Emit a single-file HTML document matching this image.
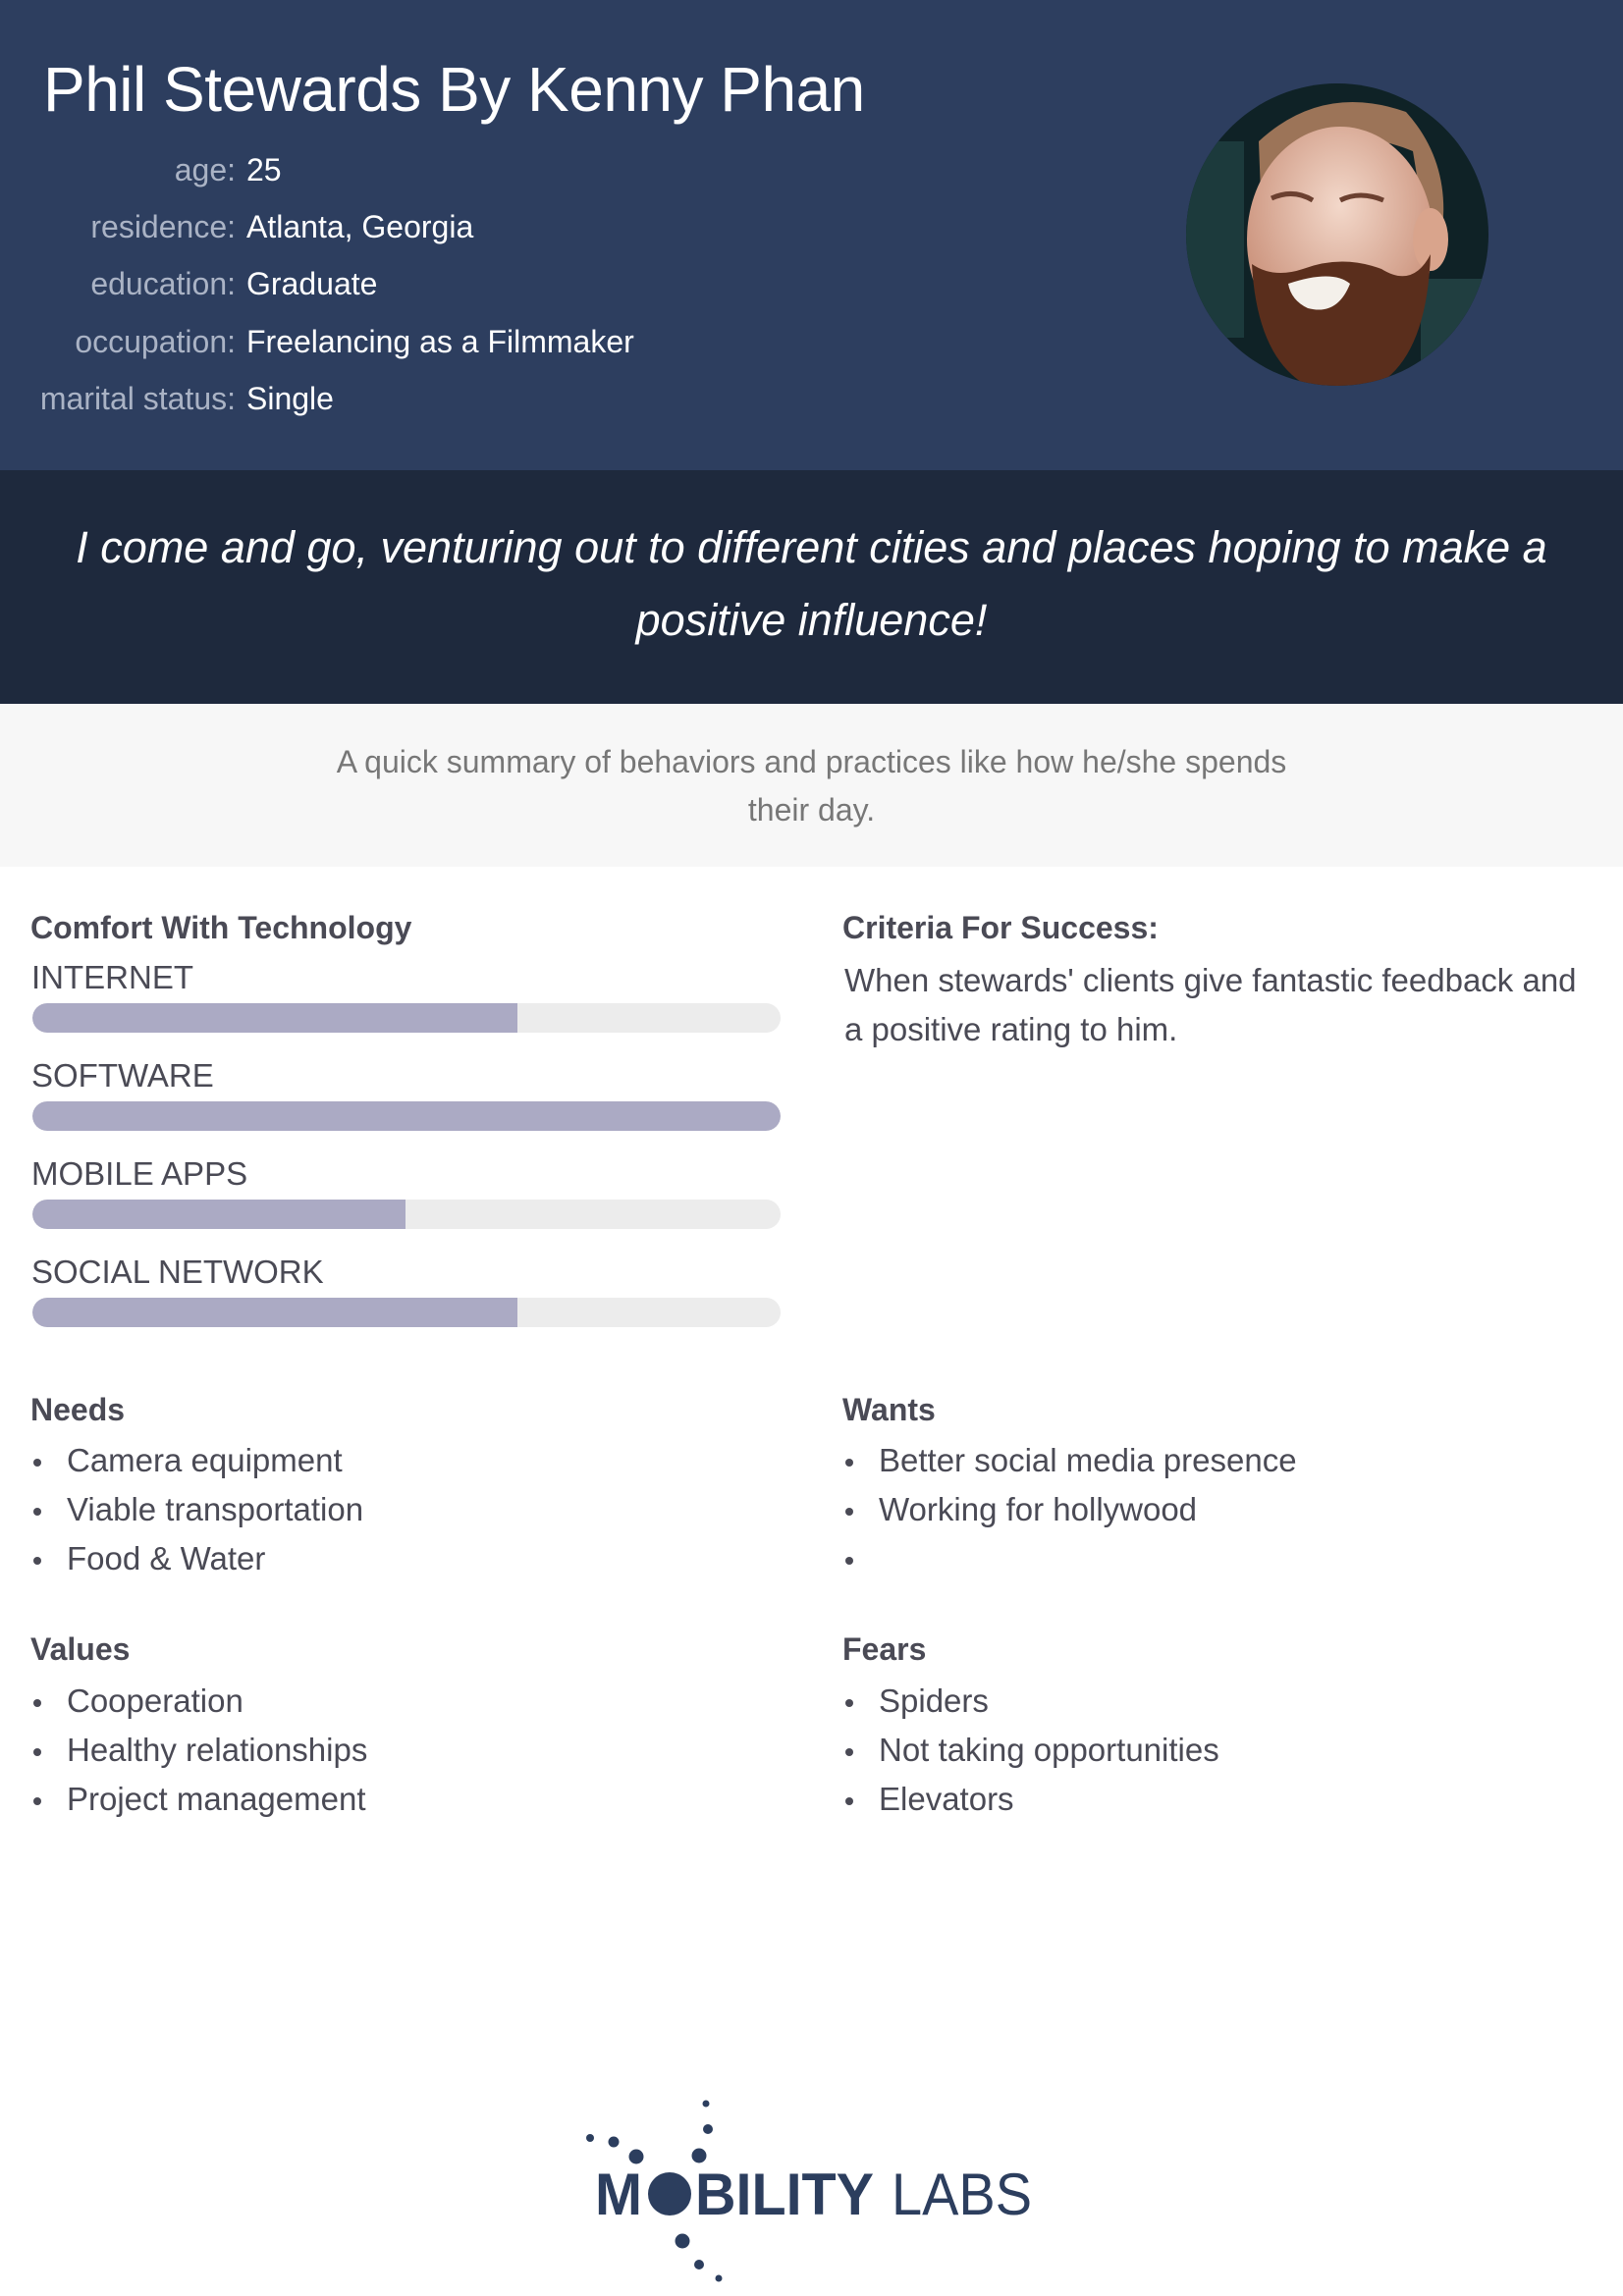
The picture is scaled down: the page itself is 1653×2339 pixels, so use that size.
<!DOCTYPE html>
<html><head><meta charset="utf-8"><style>
*{margin:0;padding:0;box-sizing:border-box}
body{width:1653px;height:2339px;background:#fff;font-family:"Liberation Sans",sans-serif;position:relative;overflow:hidden}
.abs{position:absolute}
#hdr{left:0;top:0;width:1653px;height:479px;background:#2d3e5f}
#quote{left:0;top:479px;width:1653px;height:238px;background:#1e293d}
#sum{left:0;top:717px;width:1653px;height:166px;background:#f7f7f7}
h1{position:absolute;left:44px;top:54px;font-size:64px;font-weight:normal;color:#fff;white-space:nowrap;letter-spacing:-0.5px}
.row{position:absolute;left:0;font-size:32px;white-space:nowrap;line-height:40px}
.row .lw{position:absolute;left:0;width:240px;text-align:right;color:#aab3c5}
.row .v{position:absolute;left:251px;color:#fff}
.q{position:absolute;left:0;width:1653px;text-align:center;color:#fff;font-style:italic;font-size:45px;line-height:74px;top:521px}
.s{position:absolute;left:0;width:1653px;text-align:center;color:#777;font-size:32px;line-height:49px;top:752px}
.h{position:absolute;font-size:32px;font-weight:bold;color:#4a4a55}
.lab{position:absolute;left:32px;font-size:33px;color:#4a4a55}
.bar{position:absolute;left:33px;width:762px;height:30px;border-radius:15px;background:#ececec;overflow:hidden}
.bar i{display:block;height:100%;background:#abaac4;border-radius:15px 0 0 15px}
.t{position:absolute;font-size:33px;color:#4a4a55;line-height:50px}
ul{position:absolute;list-style:none;font-size:33px;color:#4a4a55;line-height:50px}
ul li{position:relative;padding-left:37px;height:50px}
ul li:before{content:"";position:absolute;left:3px;top:23px;width:8px;height:8px;border-radius:50%;background:#4a4a55}
</style></head><body>
<div id="hdr" class="abs"></div>
<div id="quote" class="abs"></div>
<div id="sum" class="abs"></div>
<h1>Phil Stewards By Kenny Phan</h1>
<div class="row" style="top:153px;width:800px"><span class="lw">age:</span><span class="v">25</span></div>
<div class="row" style="top:211px;width:800px"><span class="lw">residence:</span><span class="v">Atlanta, Georgia</span></div>
<div class="row" style="top:269px;width:800px"><span class="lw">education:</span><span class="v">Graduate</span></div>
<div class="row" style="top:328px;width:800px"><span class="lw">occupation:</span><span class="v">Freelancing as a Filmmaker</span></div>
<div class="row" style="top:386px;width:800px"><span class="lw">marital status:</span><span class="v">Single</span></div>

<svg class="abs" style="left:1207px;top:84px" width="310" height="310" viewBox="0 0 310 310">
<defs><clipPath id="c"><circle cx="155" cy="155" r="154"/></clipPath>
<radialGradient id="sk" cx="0.5" cy="0.35" r="0.6"><stop offset="0" stop-color="#f3d8ca"/><stop offset="1" stop-color="#c98f78"/></radialGradient></defs>
<g clip-path="url(#c)">
<rect width="310" height="310" fill="#0f2226"/>
<rect x="0" y="60" width="60" height="200" fill="#1c3a3c"/>
<rect x="240" y="200" width="70" height="110" fill="#203e40"/>
<path d="M75 60 Q140 0 225 30 Q270 80 262 150 L245 150 L232 70 Q160 40 95 80 L78 140 Z" fill="#9c7458"/>
<ellipse cx="158" cy="160" rx="95" ry="115" fill="url(#sk)"/>
<ellipse cx="250" cy="160" rx="18" ry="32" fill="#d9a48c"/>
<path d="M68 185 Q75 310 160 320 Q245 310 250 175 Q232 210 200 190 Q160 175 120 190 Q90 200 68 185 Z" fill="#5a2e1c"/>
<path d="M105 205 Q150 190 168 205 Q155 238 125 230 Q108 222 105 205 Z" fill="#f4f0ea"/>
<path d="M88 118 Q110 108 130 120" stroke="#6b4030" stroke-width="5" fill="none"/>
<path d="M158 120 Q178 110 202 120" stroke="#6b4030" stroke-width="5" fill="none"/>
</g></svg>

<div class="q">I come and go, venturing out to different cities and places hoping to make a<br>positive influence!</div>
<div class="s">A quick summary of behaviors and practices like how he/she spends<br>their day.</div>

<div class="h" style="left:31px;top:927px">Comfort With Technology</div>
<div class="lab" style="top:977px">INTERNET</div>
<div class="bar" style="top:1022px"><i style="width:494px"></i></div>
<div class="lab" style="top:1077px">SOFTWARE</div>
<div class="bar" style="top:1122px"><i style="width:762px;border-radius:15px"></i></div>
<div class="lab" style="top:1177px">MOBILE APPS</div>
<div class="bar" style="top:1222px"><i style="width:380px"></i></div>
<div class="lab" style="top:1277px">SOCIAL NETWORK</div>
<div class="bar" style="top:1322px"><i style="width:494px"></i></div>

<div class="h" style="left:858px;top:927px">Criteria For Success:</div>
<div class="t" style="left:860px;top:974px">When stewards' clients give fantastic feedback and<br>a positive rating to him.</div>

<div class="h" style="left:31px;top:1418px">Needs</div>
<ul style="left:31px;top:1463px"><li>Camera equipment</li><li>Viable transportation</li><li>Food &amp; Water</li></ul>
<div class="h" style="left:858px;top:1418px">Wants</div>
<ul style="left:858px;top:1463px"><li>Better social media presence</li><li>Working for hollywood</li><li></li></ul>
<div class="h" style="left:31px;top:1662px">Values</div>
<ul style="left:31px;top:1708px"><li>Cooperation</li><li>Healthy relationships</li><li>Project management</li></ul>
<div class="h" style="left:858px;top:1662px">Fears</div>
<ul style="left:858px;top:1708px"><li>Spiders</li><li>Not taking opportunities</li><li>Elevators</li></ul>

<svg class="abs" style="left:0;top:2100px" width="1653" height="239" viewBox="0 2100 1653 239">
<g fill="#2c3e5e">
<circle cx="601" cy="2178" r="4"/><circle cx="625" cy="2182" r="5.5"/><circle cx="648" cy="2197" r="7.5"/>
<circle cx="712" cy="2196" r="7.5"/><circle cx="721" cy="2169" r="5"/><circle cx="719" cy="2143" r="3.5"/>
<circle cx="695" cy="2283" r="7.5"/><circle cx="712" cy="2307" r="5"/><circle cx="732" cy="2321" r="3.5"/>
<circle cx="682" cy="2235" r="22"/>
<text x="606" y="2256" font-family="Liberation Sans" font-weight="bold" font-size="60" textLength="48" lengthAdjust="spacingAndGlyphs">M</text>
<text x="708" y="2256" font-family="Liberation Sans" font-weight="bold" font-size="60" textLength="182" lengthAdjust="spacingAndGlyphs">BILITY</text>
<text x="908" y="2256" font-family="Liberation Sans" font-size="60" textLength="143" lengthAdjust="spacingAndGlyphs">LABS</text>
</g></svg>
</body></html>
